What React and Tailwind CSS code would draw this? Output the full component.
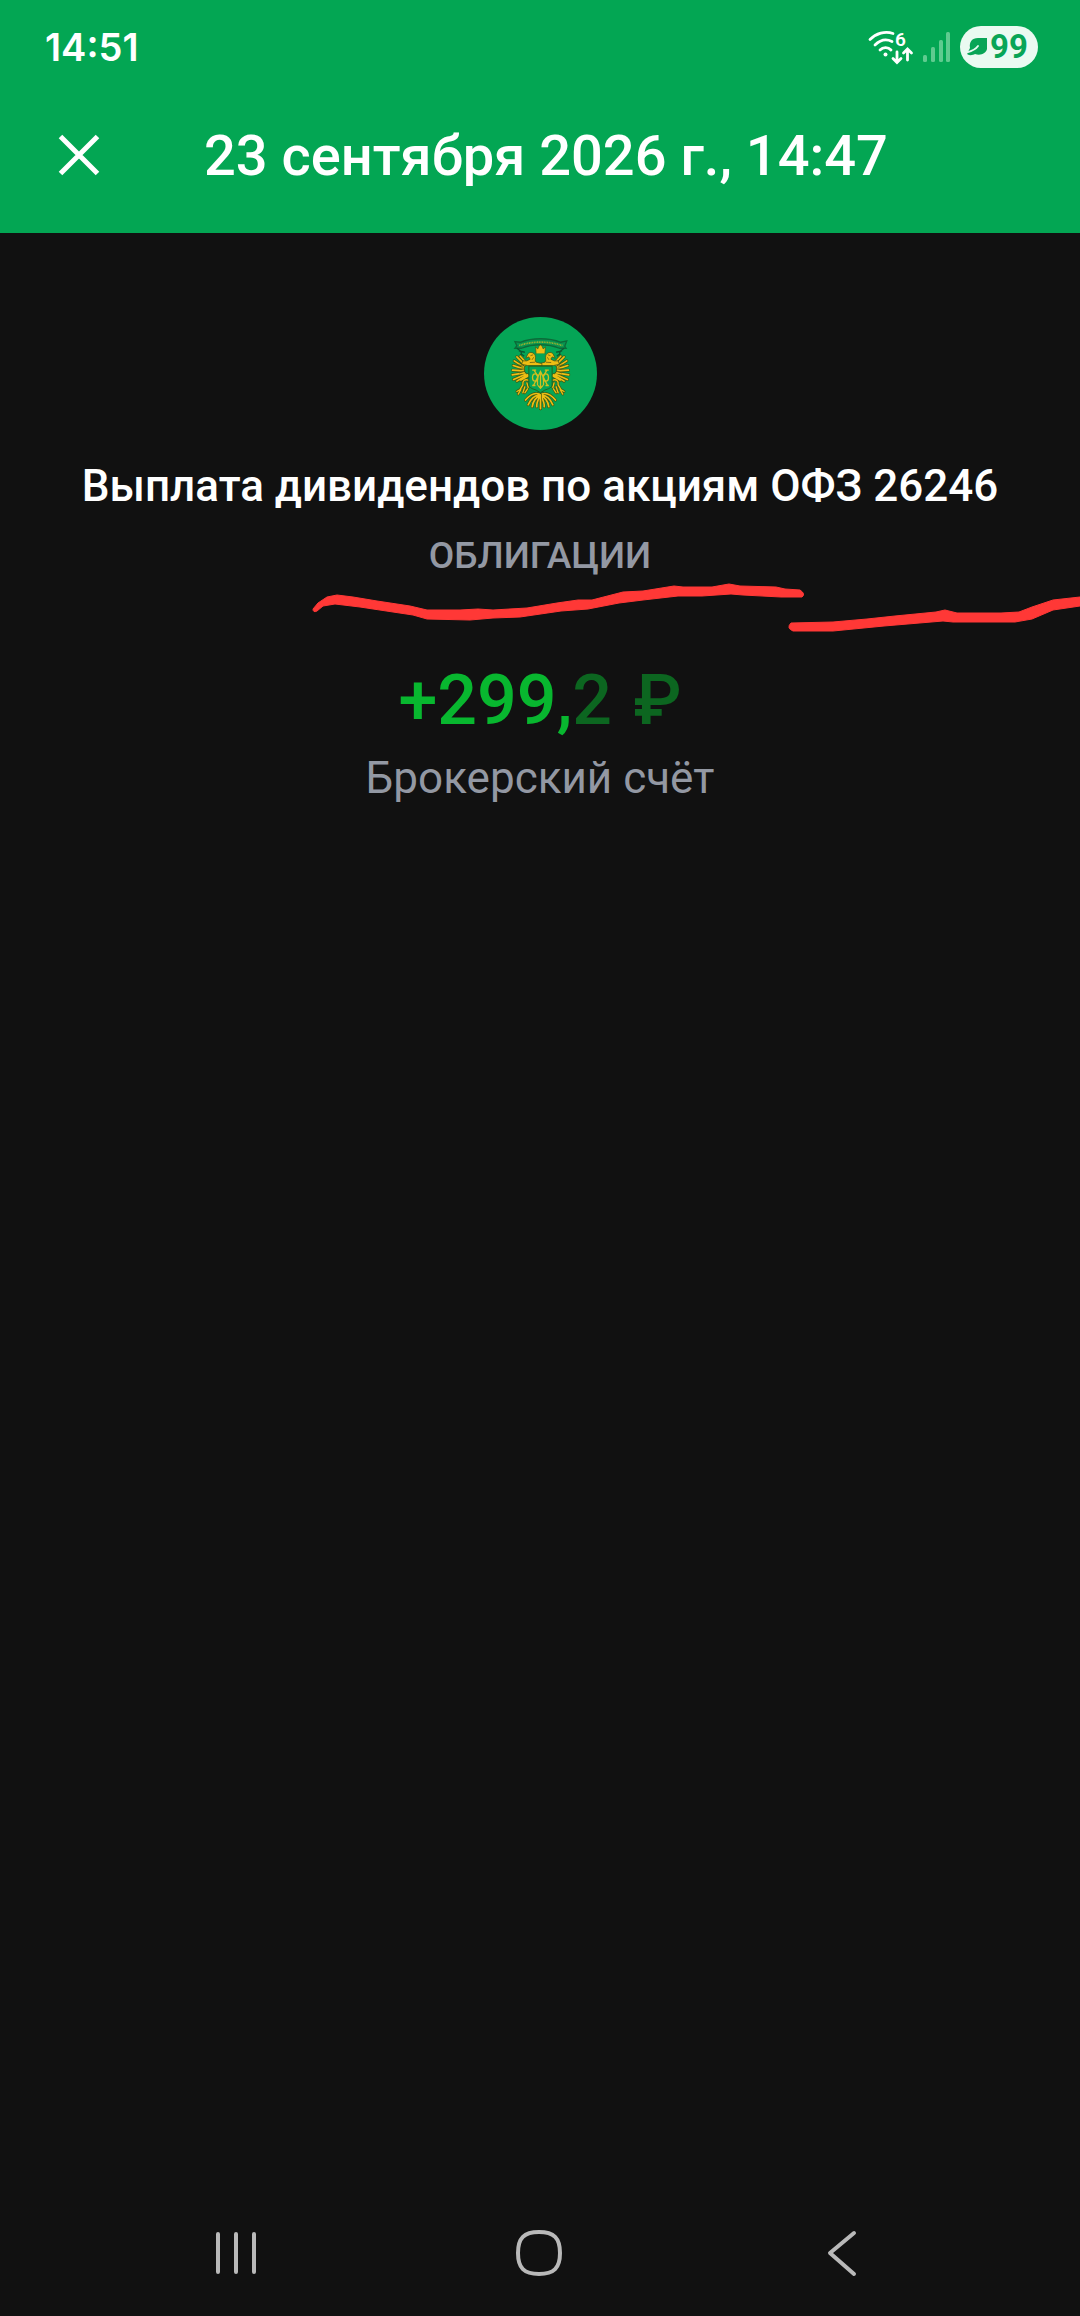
import React from 'react';

const WifiIcon = () => (
  <svg viewBox="0 0 46 36" className="w-[46px] h-[36px]" fill="none" stroke="currentColor" strokeLinecap="round" aria-label="Wi-Fi 6">
    <path d="M2 10.500C8 4.500 17 1.500 25 4.500" strokeWidth="2.800" />
    <path d="M7 16C12 11 18 9.500 24 12.500" strokeWidth="2.800" />
    <path d="M12 21C15 18 20 17.600 23 21" strokeWidth="2.800" />
    <circle cx="17.500" cy="25.500" r="2" fill="currentColor" stroke="none" />
    <text x="27" y="16.500" fontSize="19" fontWeight="600" fill="currentColor" stroke="none" fontFamily="Roboto, sans-serif">6</text>
    <path d="M29 23V33M25 29.500L29 33.500L33 29.500" strokeWidth="2.800" />
    <path d="M39.500 31V20.500M35.500 24L39.500 20L43.500 24" strokeWidth="2.800" />
  </svg>
);

const SignalIcon = () => (
  <svg viewBox="0 0 28 32" className="w-[28px] h-[32px]" fill="#5fcb8f" aria-label="Сигнал сети">
    <rect x="0" y="24" width="4" height="7" rx="1.500" />
    <rect x="8" y="16" width="4" height="15" rx="1.500" />
    <rect x="16" y="9" width="4" height="22" rx="1.500" />
    <rect x="23" y="1" width="4" height="30" rx="1.500" />
  </svg>
);

const LeafIcon = () => (
  <svg viewBox="0 0 22 20" className="w-[22px] h-[20px] shrink-0" aria-hidden="true">
    <path d="M21 1H12C6 1 3 5 4 11L1 17C4 19 7 18 9 17C15 19 20 16 21 12Z" fill="currentColor" />
    <path d="M12 9C10 12 6 14 1 15.500" stroke="#eafaf1" strokeWidth="1.800" fill="none" strokeLinecap="round" />
  </svg>
);

const WING = 'M250 176L270 154M256 180L280 156M260 186L288 168M260 192L291 182M260 198L293 196M258 204L294 210M254 208L290 224M248 210L280 229M244 212L268 226';
const CLAW = 'M246 226C256 222 264 228 262 240M250 234L246 248M262 240L270 254L280 260M256 246L262 264M248 252L256 264M268 254L276 268';
const TAIL = 'M213 268C228 262 244 274 254 286M213 272C226 270 240 284 246 300M211 274C222 276 232 290 234 306M209 270V312M211 274C216 284 222 296 220 306';

// Right half of the eagle, the left one is mirrored.
const EagleHalf = () => (
  <g fill="none" strokeLinecap="round">
    <g stroke="#3d5a14">
      <path d={WING} strokeWidth="9" />
      <path d={CLAW} strokeWidth="8" />
      <path d={TAIL} strokeWidth="9" />
    </g>
    <g stroke="#eebe14">
      <path d={WING} strokeWidth="5" />
      <path d={CLAW} strokeWidth="4" />
      <path d={TAIL} strokeWidth="5" />
    </g>
    <path d="M206 176L222 172C228 168 222 160 225 152C228 143 240 139 247 147L253 160L244 156L240 163L250 168H262L266 178L248 182H206Z" fill="#eebe14" stroke="#3d4a12" strokeWidth="2" strokeLinejoin="round" />
    <path d="M232 150L238 152M230 158L234 164M226 172L240 173M262 184L274 180M258 192L272 192M256 198L272 204" stroke="#4b4a10" strokeWidth="2" />
  </g>
);

const MinistryEmblem = () => (
  <svg viewBox="39 36 340 340" className="w-[113px] h-[113px]" role="img" aria-label="ОФЗ">
    <circle cx="209" cy="206" r="170" fill="#05a556" />
    {/* ribbon */}
    <path d="M132 110L148 112C184 98 234 98 270 112L288 108L282 124L286 130H266C232 116 186 116 152 130H132L138 122Z" fill="#089450" stroke="#0c6a38" strokeWidth="4" />
    <path d="M138 130C150 138 156 144 148 152M280 130C268 138 262 144 270 152M144 138L162 142M274 138L256 142M152 148L160 154M266 148L258 154" fill="none" stroke="#0c5730" strokeWidth="4" />
    <path d="M145 122C185 108 233 108 275 122" fill="none" stroke="#a3b52c" strokeWidth="5" strokeDasharray="3 2" />
    <EagleHalf />
    <g transform="matrix(-1 0 0 1 418 0)">
      <EagleHalf />
    </g>
    {/* crown */}
    <path d="M194 126L201 132L204 124L209 120L214 124L217 132L224 126L222 148H196Z" fill="#eebe14" stroke="#3d5a14" strokeWidth="2" />
    <path d="M196 146H222C222 160 216 168 209 172C202 168 196 160 196 146Z" fill="#05a556" />
    {/* shield with monogram */}
    <path d="M174 184H244V238C244 250 232 252 222 256L209 264L196 256C186 252 174 250 174 238Z" fill="#05a556" stroke="#26621c" strokeWidth="3" />
    <g fill="none" stroke="#d3bf1e" strokeWidth="4">
      <path d="M190 196L200 214V242M228 196L218 214V242M188 242L209 200L230 242M209 200V250" />
      <path d="M184 196H196M222 196H234M184 242H194M224 242H234M202 242L209 250L216 242" />
      <ellipse cx="193" cy="218" rx="8" ry="11" />
      <ellipse cx="225" cy="218" rx="8" ry="11" />
    </g>
  </svg>
);

const MarkerStrokes = () => (
  <svg viewBox="0 0 1080 60" className="absolute left-0 top-[347px] w-full pointer-events-none" fill="#ff3836" stroke="#ff3836" strokeLinejoin="round" aria-hidden="true">
    <path d="M313 29L318 23L327 17L337 15L353 17L377 21L410 26L427 30H460L478 29L493 30L527 28L557 23L578 20H592L623 12L643 11L674 6L683 7L712 7L729 4L740 6L776 7L785 9L800 10Q806 14 802 17L781 17L743 15L731 14L702 16H678L643 20L619 23L588 29L561 31L520 37L493 38L470 40L427 39L413 35L393 32L360 27L335 24L323 26L317 31Q313 33 313 29Z" />
    <path d="M791 43L833 42L867 39L895 36L936 32L945 30L957 33H1001L1019 32L1032 27L1053 20L1080 17V26L1053 30L1032 39L1015 42H953L943 41L884 46L833 51H793Q786 48 791 43Z" />
  </svg>
);

const navButton = 'flex h-full items-center justify-center';

export default function App() {
  return (
    <div className="flex min-h-screen flex-col bg-[#111111] font-['Roboto',sans-serif] text-white">
      <header className="bg-[#03a653] pb-[15px]">
        {/* Status bar */}
        <div className="flex h-[94px] items-center justify-between pl-[45px] pr-[42px]">
          <time className="font-['Inter',sans-serif] text-[38px] font-semibold">14:51</time>
          <div className="flex items-center gap-[9px]">
            <WifiIcon />
            <SignalIcon />
            <div className="flex h-[42px] w-[78px] items-center justify-center gap-[2px] rounded-full bg-[#eafaf1] pr-1 text-[#08a556]">
              <LeafIcon />
              <span className="text-[33px] font-bold">99</span>
            </div>
          </div>
        </div>

        {/* Toolbar */}
        <div className="flex h-[124px] items-center gap-[102px] px-[56px]">
          <button type="button" aria-label="Закрыть" className="shrink-0">
            <svg viewBox="0 0 46 46" className="w-[46px] h-[46px]" stroke="currentColor" strokeWidth="5" fill="none">
              <path d="M4.500 3.500L41.500 40.500M41.500 3.500L4.500 40.500" />
            </svg>
          </button>
          <h1 className="text-[56px] font-medium whitespace-nowrap">23 сентября 2026 г., 14:47</h1>
        </div>
      </header>

      <main className="relative flex flex-1 flex-col items-center pt-[84px] text-center">
        <MinistryEmblem />
        <h2 className="mt-7 text-[44px] leading-[56px] font-medium">Выплата дивидендов по акциям ОФЗ 26246</h2>
        <p className="mt-[18px] text-[37px] leading-[48px] font-medium text-[#9398a3]">ОБЛИГАЦИИ</p>
        <p className="mt-20 text-[70px] leading-[80px] font-medium text-[#08b72f]">
          +299,<span className="text-[#0c6620]">2 <span className="ml-1">₽</span></span>
        </p>
        <p className="mt-[10px] text-[44px] leading-[56px] text-[#9398a3]">Брокерский счёт</p>
        <MarkerStrokes />
      </main>

      {/* System navigation */}
      <nav className="grid h-[126px] grid-cols-3 pl-[85px] pr-[87px]">
        <button type="button" aria-label="Недавние" className={navButton}>
          <svg viewBox="0 0 44 48" className="w-[44px] h-[48px]" stroke="#b9b9b9" strokeWidth="4" strokeLinecap="round">
            <path d="M4 5V43M22 5V43M40 5V43" />
          </svg>
        </button>
        <button type="button" aria-label="Домой" className={navButton}>
          <svg viewBox="0 0 48 48" className="w-[48px] h-[48px]" stroke="#b9b9b9" strokeWidth="4" fill="none">
            <path d="M24 3C39 3 45 9 45 24S39 45 24 45S3 39 3 24S9 3 24 3Z" />
          </svg>
        </button>
        <button type="button" aria-label="Назад" className={navButton}>
          <svg viewBox="0 0 32 48" className="w-[32px] h-[48px]" stroke="#b9b9b9" strokeWidth="4" fill="none" strokeLinecap="round" strokeLinejoin="round">
            <path d="M28 4L4 24L28 45" />
          </svg>
        </button>
      </nav>
    </div>
  );
}
